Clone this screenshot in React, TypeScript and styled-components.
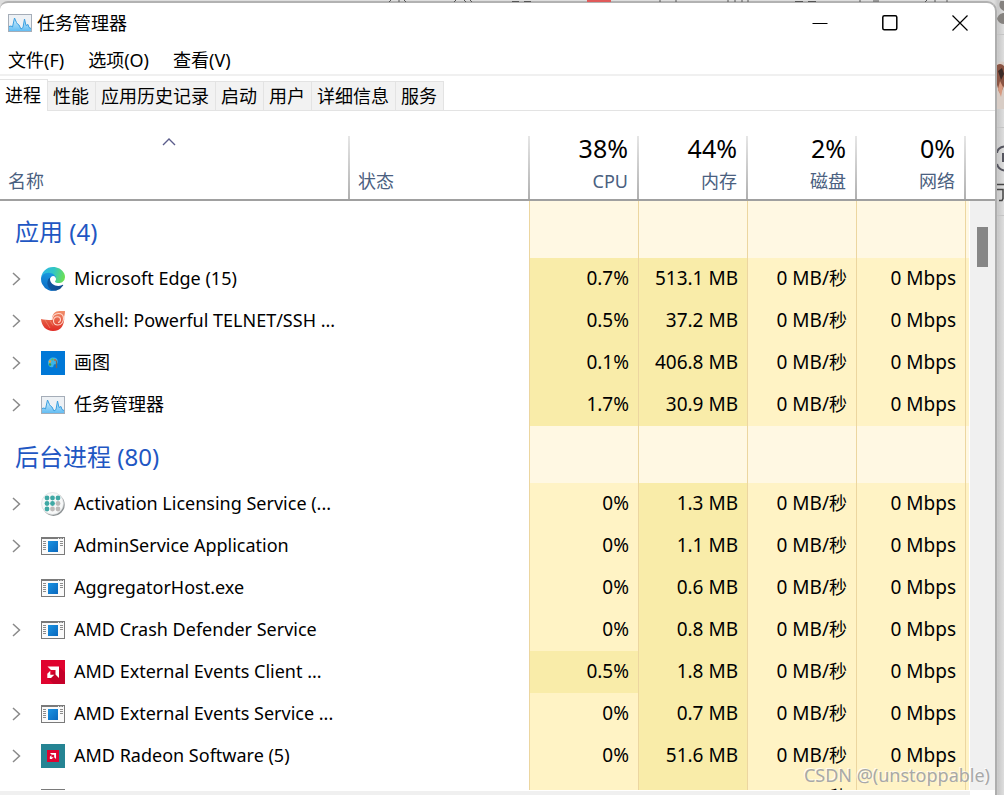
import React from 'react';
import styled, { createGlobalStyle, css } from 'styled-components';

const GlobalStyle = createGlobalStyle`
  * { box-sizing: border-box; }
  body {
    margin: 0;
    overflow: hidden;
    background: #dedede;
    color: #000;
    font-family: "Noto Sans", "Noto Sans CJK SC", sans-serif;
    font-size: 18px;
    line-height: 24px;
  }
  button {
    font: inherit;
    color: inherit;
    border: 0;
    padding: 0;
    margin: 0;
    background: none;
  }
  svg { display: block; flex: none; }
`;

/* ---------- shell ---------- */

const Desktop = styled.div`
  position: relative;
  display: grid;
  grid-template-columns: minmax(0, 1fr) 7px;
  height: 100vh;
  padding-top: 1px;
  background: linear-gradient(90deg, #dedede 99%, #c8c8c8 99.4%, #dedede);
`;

const Window = styled.main`
  display: flex;
  flex-direction: column;
  min-height: 0;
  overflow: hidden;
  background: #fff;
  border-top: 2px solid #b2b2b2;
  border-right: 2px solid #aeaeae;
  border-radius: 8px 10px 0 0;
`;

const SideStrip = styled.aside`
  overflow: hidden;
`;

const TopStrip = styled.div`
  position: absolute;
  inset: 0 0 auto 0;
  height: 3px;
  overflow: hidden;
`;

const TitleBar = styled.header`
  display: flex;
  align-items: center;
  height: 41px;
  padding: 0 0 1px 8px;
  gap: 5px;
  flex: none;
`;

const Title = styled.h1`
  flex: 1;
  margin: 0;
  font-size: 18px;
  font-weight: 400;
`;

const WindowControls = styled.div`
  display: flex;
  align-self: stretch;
`;

const ControlButton = styled.button`
  display: grid;
  place-items: center;
  width: 70px;
`;

const MenuBar = styled.nav`
  display: flex;
  gap: 24px;
  height: 32px;
  padding: 4px 8px;
  border-bottom: 2px solid #f0f0f0;
  flex: none;
`;

const MenuItem = styled.button`
  white-space: nowrap;
`;

const TabBar = styled.div`
  display: flex;
  align-items: flex-end;
  height: 35px;
  border-bottom: 1px solid #e3e3e3;
  flex: none;
`;

const Tab = styled.button<{ $active?: boolean }>`
  height: 29px;
  padding: 0 6px 0 5px;
  white-space: nowrap;
  background: #f2f2f2;
  border-top: 1px solid #e3e3e3;
  border-right: 1px solid #e3e3e3;
  ${(p) =>
    p.$active &&
    css`
      height: 32px;
      margin-bottom: -1px;
      padding-bottom: 2px;
      background: #fff;
    `}
`;

/* ---------- table ---------- */

const Content = styled.section`
  display: flex;
  flex: 1;
  min-height: 0;
  overflow: hidden;
`;

const TableClip = styled.div`
  flex: 1;
  min-width: 0;
  padding-top: 25px;
  overflow: hidden;
`;

const ProcessTable = styled.table`
  width: 100%;
  table-layout: fixed;
  border-collapse: separate;
  border-spacing: 0;
`;

const Col = styled.col<{ $width?: number }>`
  width: ${(p) => (p.$width ? `${p.$width}px` : 'auto')};
`;

const HeadCell = styled.th<{ $end?: boolean; $plain?: boolean }>`
  height: 65px;
  padding: 0 9px 0 ${(p) => (p.$end ? 0 : 8)}px;
  vertical-align: bottom;
  text-align: ${(p) => (p.$end ? 'right' : 'left')};
  font-weight: 400;
  color: #4a6080;
  border-bottom: 2px solid #a0a0a0;
  ${(p) =>
    !p.$plain &&
    css`
      background: linear-gradient(#e6e6e6, #b0b0b0) right / 2px 100% no-repeat;
      padding-right: 11px;
    `}
`;

const HeadButton = styled.button<{ $end?: boolean }>`
  display: flex;
  flex-direction: column;
  justify-content: space-between;
  align-items: ${(p) => (p.$end ? 'flex-end' : 'flex-start')};
  width: 100%;
  height: 63px;
  padding: ${(p) => (p.$end ? 0 : 2)}px 0 6px;
`;

const SortMark = styled.span`
  align-self: center;
  padding-right: 9px;
`;

const Total = styled.span`
  font-size: 25px;
  line-height: 24px;
  color: #000;
`;

const GroupCell = styled.th`
  height: 57px;
  padding: 4px 0 0 15px;
  text-align: left;
  font-size: 24px;
  line-height: 32px;
  font-weight: 400;
  color: #1f57c3;
`;

const shades = { group: '#fff8e3', light: '#fff3c5', heavy: '#f9eca9', none: '#fff' };
type Shade = keyof typeof shades;

const Cell = styled.td<{ $shade: Shade }>`
  height: 42px;
  padding: 0 9px 2px 0;
  text-align: right;
  white-space: nowrap;
  font-size: 19px;
  background: ${(p) => shades[p.$shade]};
  border-right: 1px solid #ecd6a0;
`;

const TailCell = styled.td<{ $shade: Shade }>`
  padding: 0;
  background: ${(p) => shades[p.$shade]};
  border-right: 1px solid #fff;
`;

const NameCell = styled.th`
  height: 42px;
  padding: 0;
  text-align: left;
  font-weight: 400;
`;

const NameLayout = styled.div`
  display: grid;
  grid-template-columns: 33px 24px minmax(0, 1fr);
  align-items: center;
  padding-left: 8px;
`;

const ExpandButton = styled.button`
  display: grid;
  place-items: center;
  width: 17px;
  height: 24px;
`;

const ProcessName = styled.span`
  padding: 0 0 2px 9px;
  white-space: nowrap;
`;

const Han = styled.span`
  font-size: 18px;
`;

const Rail = styled.div`
  display: flex;
  flex-direction: column;
  width: 25px;
  padding-top: 25px;
`;

const RailHead = styled.div`
  height: 65px;
  border-bottom: 2px solid #a0a0a0;
`;

const Track = styled.div`
  flex: 1;
  padding: 26px 7px 0;
  background: #f0f0f0;
`;

const Thumb = styled.div`
  height: 40px;
  background: #868686;
`;

const BottomBar = styled.div`
  flex: none;
  height: 4px;
  margin: 1px 25px 0 0;
  background: #f0f0f0;
`;

const Watermark = styled.div`
  position: absolute;
  right: 14px;
  bottom: 8px;
  font-size: 18px;
  line-height: 24px;
  color: #a8a8a8;
  text-shadow: -1px -1px 0 rgba(255, 255, 255, 0.8);
`;

/* ---------- drawings ---------- */

const MonitorIcon = () => (
  <svg width="24" height="18" viewBox="0 0 24 18">
    <defs>
      <linearGradient id="mon" x1="0" y1="0" x2="0" y2="1">
        <stop offset="0" stopColor="#d5effc" />
        <stop offset="1" stopColor="#63bdf3" />
      </linearGradient>
    </defs>
    <rect x="0.5" y="0.5" width="23" height="17" fill="#edf1f5" stroke="#a5adb8" />
    <path d="M1 12.5l2-.5 1.500 1L6.500 4l2 4.500 1 1.500 1.500 1 2 4 2-1.500L16.500 5l1.500 6.500 2-1 1 3 2 1V17H1z" fill="url(#mon)" />
    <path d="M1 12.500l2-.5 1.500 1L6.500 4l2 4.500 1 1.500 1.500 1 2 4 2-1.500L16.500 5l1.500 6.500 2-1 1 3 2 1" fill="none" stroke="#3a9fe0" />
  </svg>
);

const EdgeIcon = () => (
  <svg width="24" height="24" viewBox="0 0 256 256">
    <defs>
      <linearGradient id="eg1" x1="0" y1="0.7" x2="1" y2="0.7">
        <stop offset="0" stopColor="#0c59a4" />
        <stop offset="1" stopColor="#114a8b" />
      </linearGradient>
      <linearGradient id="eg2" x1="0.6" y1="0" x2="0.4" y2="1">
        <stop offset="0" stopColor="#1b9de2" />
        <stop offset="0.5" stopColor="#1382d3" />
        <stop offset="1" stopColor="#0b6cc4" />
      </linearGradient>
      <linearGradient id="eg3" x1="0" y1="0.3" x2="1" y2="0.5">
        <stop offset="0" stopColor="#2cb5e8" />
        <stop offset="0.5" stopColor="#32c6c4" />
        <stop offset="1" stopColor="#6ce052" />
      </linearGradient>
    </defs>
    <path fill="url(#eg1)" d="M231 190.500c-3.400 1.800-6.900 3.400-10.500 4.700a101.900 101.900 0 0 1-35.900 6.500c-47.300 0-88.500-32.500-88.500-74.300a31.500 31.500 0 0 1 16.400-27.300c-42.800 1.800-53.800 46.400-53.800 72.500 0 73.900 68.100 81.400 82.800 81.400 7.900 0 19.800-2.300 27-4.600l1.300-.4a128.300 128.300 0 0 0 66.600-52.800 4 4 0 0 0-5.400-5.700z" />
    <path fill="url(#eg2)" d="M105.700 241.400a79.200 79.200 0 0 1-22.700-21.300 80.700 80.700 0 0 1 29.500-120c3.200-1.500 8.500-4.100 15.600-4a32.400 32.400 0 0 1 25.700 13 31.900 31.900 0 0 1 6.300 18.700c0-.2 24.500-79.600-80-79.600-43.900 0-80 41.700-80 78.200a130.200 130.200 0 0 0 12.100 56 128 128 0 0 0 156.400 67 75.500 75.500 0 0 1-62.800-8z" />
    <path fill="url(#eg3)" d="M152.300 148.900c-.9 1-3.300 2.500-3.300 5.700 0 2.600 1.700 5.100 4.700 7.200 14.400 10 41.500 8.700 41.600 8.700a59.600 59.600 0 0 0 30.300-8.400 61.400 61.400 0 0 0 30.400-52.900c.3-22.400-8-37.300-11.300-43.900C223.500 23.900 177.700 0 128 0A128 128 0 0 0 0 126.200c.5-36.500 36.800-66 80-66 3.500 0 23.500.3 42 10a72.600 72.600 0 0 1 30.900 29.300c6.100 10.600 7.200 24.100 7.200 29.500s-2.700 13.300-7.800 19.900z" />
  </svg>
);

const ShellIcon = () => (
  <svg width="24" height="20" viewBox="0 0 24 20">
    <defs>
      <linearGradient id="sh" x1="0" y1="0" x2="0" y2="1">
        <stop offset="0" stopColor="#f2906c" />
        <stop offset="0.55" stopColor="#e4553f" />
        <stop offset="1" stopColor="#e02a25" />
      </linearGradient>
    </defs>
    <path d="M0 8c3 1 6 .8 11 1C11 3 14 0 18.500 0H24c0 3-.5 4-.8 5.500C23.800 14 20 20 12 20 5 20 .5 15 0 8z" fill="url(#sh)" />
    <path d="M11 9c.5-4 3-6.500 6.500-6.500 3 0 5 2 5 5 0 4-2.500 6.500-5.700 6.500-2.800 0-4.300-1.700-4.300-4 0-2.500 1.700-4.200 4-4.200 1.800 0 3 1.200 3 2.800 0 1.700-1 2.900-2.500 2.900" fill="none" stroke="#ffd9cc" strokeWidth="1.100" />
    <path d="M4 9l5 8M9 9.500l3 5" stroke="#f08a70" strokeWidth="0.700" />
  </svg>
);

const PaintIcon = () => (
  <svg width="24" height="24" viewBox="0 0 24 24">
    <rect width="24" height="24" fill="#0078d7" />
    <path d="M7 12c0-3.500 2.500-5.500 5.500-5.500 2.500 0 4.300 1.500 4.300 4 0 2-1 2.800-2.300 2.800-1.500 0-2 .5-2 1.700 0 1-1 1.200-2 1.200C8.500 16.200 7 14.500 7 12z" fill="#3db4e8" />
    <circle cx="9" cy="10.500" r="1.200" fill="#e9a13b" />
    <circle cx="11.500" cy="8.500" r="1.100" fill="#5fc24d" />
    <circle cx="9" cy="13.500" r="1.200" fill="#3f9f43" />
    <circle cx="14" cy="9" r="1" fill="#c7683d" />
    <path d="M15.500 9.500V17" stroke="#7b6555" strokeWidth="1.300" />
  </svg>
);

const ActivationIcon = () => (
  <svg width="24" height="24" viewBox="0 0 24 24">
    <circle cx="12.500" cy="12.700" r="11.200" fill="#8d9294" />
    <circle cx="11.500" cy="11.500" r="11" fill="#f7f8f8" stroke="#d7dbdc" strokeWidth="0.700" />
    {[6, 11.5, 17].map((y, r) =>
      [6, 11.5, 17].map((x, c) => (
        <circle key={`${r}${c}`} cx={x} cy={y} r="2.400" fill={r + c > 2 ? '#bdbab9' : '#3fa8a4'} />
      )),
    )}
  </svg>
);

const AppIcon = () => (
  <svg width="24" height="18" viewBox="0 0 24 18">
    <defs>
      <linearGradient id="ap" x1="0" y1="0" x2="1" y2="1">
        <stop offset="0" stopColor="#1a93e3" />
        <stop offset="1" stopColor="#0a68bd" />
      </linearGradient>
    </defs>
    <rect x="0.500" y="0.500" width="23" height="17" fill="#fafafa" stroke="#7a7a7a" />
    <path d="M0 1h24" stroke="#7a7a7a" strokeWidth="2" />
    <path d="M17 1.500h1M19.500 1.500h1M22 1.500h1" stroke="#eee" />
    <path d="M2 4.500h3M2 6.500h3M2 8.500h3M2 10.500h3M2 12.500h3M19 4.500h3M19 6.500h3M19 8.500h3" stroke="#8c8c8c" />
    <rect x="7" y="4" width="10" height="11" fill="url(#ap)" />
  </svg>
);

const AmdMark = () => (
  <>
    <path d="M6.500 6.500H18V18l-3.500-3.500V10H10z" fill="#fff" />
    <path d="M9.300 10.800V14.800h4L10 18H6.300v-4.200z" fill="#fff" />
  </>
);

const AmdIcon = () => (
  <svg width="24" height="24" viewBox="0 0 24 24">
    <rect width="24" height="24" fill="#e0032f" />
    <path d="M18 6.500l6 6V24H12.500l-6-6z" fill="#c50029" />
    <AmdMark />
  </svg>
);

const RadeonIcon = () => (
  <svg width="24" height="24" viewBox="0 0 24 24">
    <rect width="24" height="24" fill="#258493" />
    <rect x="6" y="6" width="12" height="12" fill="#dd0431" />
    <g transform="translate(5.500 5.500) scale(0.530)">
      <AmdMark />
    </g>
  </svg>
);

const icons = {
  monitor: MonitorIcon,
  edge: EdgeIcon,
  shell: ShellIcon,
  paint: PaintIcon,
  activation: ActivationIcon,
  app: AppIcon,
  amd: AmdIcon,
  radeon: RadeonIcon,
};

/* ---------- data ---------- */

type Process = {
  name: string;
  icon: keyof typeof icons;
  cpu: string;
  mem: string;
  leaf?: boolean;
};

const groups: { title: string; rows: Process[] }[] = [
  {
    title: '应用 (4)',
    rows: [
      { name: 'Microsoft Edge (15)', icon: 'edge', cpu: '0.7%', mem: '513.1 MB' },
      { name: 'Xshell: Powerful TELNET/SSH ...', icon: 'shell', cpu: '0.5%', mem: '37.2 MB' },
      { name: '画图', icon: 'paint', cpu: '0.1%', mem: '406.8 MB' },
      { name: '任务管理器', icon: 'monitor', cpu: '1.7%', mem: '30.9 MB' },
    ],
  },
  {
    title: '后台进程 (80)',
    rows: [
      { name: 'Activation Licensing Service (...', icon: 'activation', cpu: '0%', mem: '1.3 MB' },
      { name: 'AdminService Application', icon: 'app', cpu: '0%', mem: '1.1 MB' },
      { name: 'AggregatorHost.exe', icon: 'app', cpu: '0%', mem: '0.6 MB', leaf: true },
      { name: 'AMD Crash Defender Service', icon: 'app', cpu: '0%', mem: '0.8 MB' },
      { name: 'AMD External Events Client ...', icon: 'amd', cpu: '0.5%', mem: '1.8 MB', leaf: true },
      { name: 'AMD External Events Service ...', icon: 'app', cpu: '0%', mem: '0.7 MB' },
      { name: 'AMD Radeon Software (5)', icon: 'radeon', cpu: '0%', mem: '51.6 MB' },
      { name: '', icon: 'app', cpu: '0%', mem: '', leaf: true },
    ],
  },
];

const metrics = [
  { total: '38%', label: 'CPU' },
  { total: '44%', label: '内存' },
  { total: '2%', label: '磁盘' },
  { total: '0%', label: '网络' },
];

const tabs = ['进程', '性能', '应用历史记录', '启动', '用户', '详细信息', '服务'];

function ProcessRow({ row }: { row: Process }) {
  const Icon = icons[row.icon];
  return (
    <tr>
      <NameCell scope="row">
        <NameLayout>
          {row.leaf ? (
            <span />
          ) : (
            <ExpandButton aria-label={`展开 ${row.name}`}>
              <svg width="9" height="14" viewBox="0 0 9 14" fill="none" stroke="#8a8a8a" strokeWidth="1.500">
                <path d="M1 1l6.500 6L1 13" />
              </svg>
            </ExpandButton>
          )}
          <Icon />
          <ProcessName>{row.name}</ProcessName>
        </NameLayout>
      </NameCell>
      <Cell $shade="none" />
      <Cell $shade={row.cpu === '0%' ? 'light' : 'heavy'}>{row.name && row.cpu}</Cell>
      <Cell $shade="heavy">{row.mem}</Cell>
      <Cell $shade="light">
        0 MB/<Han>秒</Han>
      </Cell>
      <Cell $shade="light">{row.name && '0 Mbps'}</Cell>
      <TailCell $shade="light" />
    </tr>
  );
}

export default function App() {
  return (
    <Desktop>
      <GlobalStyle />
      <TopStrip aria-hidden="true">
        <svg width="1004" height="2" viewBox="0 0 1004 2">
          <path d="M587 0h24v2h-24z" fill="#e05a5a" />
          <path d="M391 0l-2 2M399 0v2M404 0l2 2M456 0l-2 2M464 0l2 2M470 0l2 2M512 1.500h7M524 1.500h7M660 0v2M676 0v2M728 0v2M735 0v2M742 0v2M748 0v2M795 1.500h8M808 1.500h8M860 0v2M873 1h6M927 0l-2 2M935 0v2M947 0v2" stroke="#555" fill="none" />
        </svg>
      </TopStrip>
      <Window>
        <TitleBar>
          <MonitorIcon />
          <Title>任务管理器</Title>
          <WindowControls>
            <ControlButton aria-label="最小化">
              <svg width="16" height="16" viewBox="0 0 16 16" stroke="#000" fill="none">
                <path d="M0.500 8.500h15" />
              </svg>
            </ControlButton>
            <ControlButton aria-label="最大化">
              <svg width="16" height="16" viewBox="0 0 16 16" stroke="#000" strokeWidth="1.500" fill="none">
                <rect x="0.800" y="0.800" width="14" height="14" rx="1.500" />
              </svg>
            </ControlButton>
            <ControlButton aria-label="关闭">
              <svg width="16" height="16" viewBox="0 0 16 16" stroke="#000" strokeWidth="1.200" fill="none">
                <path d="M0.500 0.500l15 15M15.500 0.500l-15 15" />
              </svg>
            </ControlButton>
          </WindowControls>
        </TitleBar>
        <MenuBar>
          <MenuItem>文件(F)</MenuItem>
          <MenuItem>选项(O)</MenuItem>
          <MenuItem>查看(V)</MenuItem>
        </MenuBar>
        <TabBar role="tablist">
          {tabs.map((t, i) => (
            <Tab key={t} role="tab" aria-selected={i === 0} $active={i === 0}>
              {t}
            </Tab>
          ))}
        </TabBar>
        <Content>
          <TableClip>
            <ProcessTable>
              <colgroup>
                <Col />
                <Col $width={180} />
                <Col $width={109} />
                <Col $width={109} />
                <Col $width={109} />
                <Col $width={109} />
                <Col $width={4} />
              </colgroup>
              <thead>
                <tr>
                  <HeadCell scope="col" aria-sort="ascending">
                    <HeadButton>
                      <SortMark>
                        <svg width="14" height="8" viewBox="0 0 14 8" fill="none" stroke="#5b5d8c" strokeWidth="1.400">
                          <path d="M1 7l6-6 6 6" />
                        </svg>
                      </SortMark>
                      名称
                    </HeadButton>
                  </HeadCell>
                  <HeadCell scope="col">
                    <HeadButton>
                      <span />
                      状态
                    </HeadButton>
                  </HeadCell>
                  {metrics.map((m) => (
                    <HeadCell key={m.label} scope="col" $end>
                      <HeadButton $end>
                        <Total>{m.total}</Total>
                        {m.label}
                      </HeadButton>
                    </HeadCell>
                  ))}
                  <HeadCell as="td" $plain />
                </tr>
              </thead>
              {groups.map((g) => (
                <tbody key={g.title}>
                  <tr>
                    <GroupCell scope="rowgroup">{g.title}</GroupCell>
                    <Cell $shade="none" />
                    {metrics.map((m) => (
                      <Cell key={m.label} $shade="group" />
                    ))}
                    <TailCell $shade="group" />
                  </tr>
                  {g.rows.map((r) => (
                    <ProcessRow key={r.name} row={r} />
                  ))}
                </tbody>
              ))}
            </ProcessTable>
          </TableClip>
          <Rail>
            <RailHead />
            <Track>
              <Thumb />
            </Track>
          </Rail>
        </Content>
        <BottomBar />
      </Window>
      <SideStrip aria-hidden="true">
        <svg width="7" height="220" viewBox="0 0 7 220">
          <path d="M7 0H3.500C1.500 3 2 8 7 10zM0 18c1-4 4-6 7-6v11C4 23 1 21 0 18z" fill="#85827f" />
          <path d="M0 33.500h7M0 126.500h7M0 214.500h7" stroke="#c4c4c4" />
          <path d="M0 63c3-3 5-3 7-2v47H0z" fill="#d8cdc6" />
          <path d="M0 64c3-2 5-1 7 1v20c-2 4-3 8-5 6L0 84z" fill="#8a5443" />
          <path d="M1 70l4-3 2 6-3 6z" fill="#3c2a26" />
          <path d="M3 80l3 6-2 10-3-8z" fill="#d79a80" />
          <path d="M7 145.500C3 146 0 149 0 152M0 163c1 4 4 6 7 6.500M6 152v9" stroke="#55555f" strokeWidth="2" fill="none" />
          <path d="M0 183.500h7M0 188.500h6v9l-1 2H2" stroke="#444" strokeWidth="1.500" fill="none" />
        </svg>
      </SideStrip>
      <Watermark>CSDN @(unstoppable)</Watermark>
    </Desktop>
  );
}
